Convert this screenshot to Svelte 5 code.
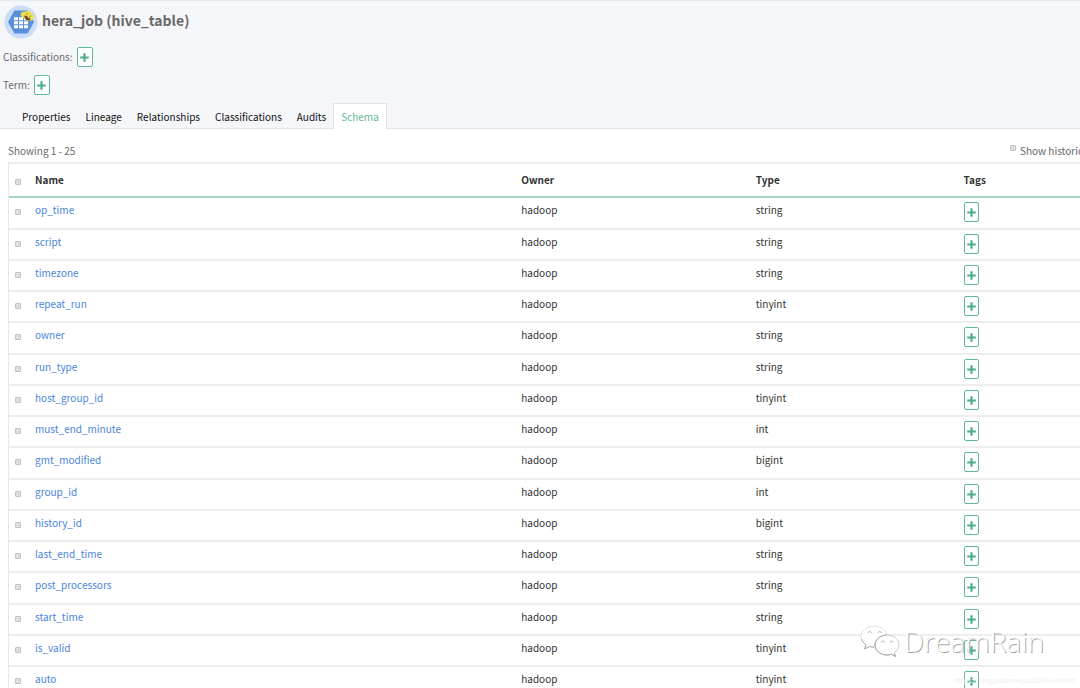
<script lang="ts">
  interface Column {
    name: string;
    type: string;
  }

  const tabs = ['Properties', 'Lineage', 'Relationships', 'Classifications', 'Audits', 'Schema'];

  const columns: Column[] = [
    { name: 'op_time', type: 'string' },
    { name: 'script', type: 'string' },
    { name: 'timezone', type: 'string' },
    { name: 'repeat_run', type: 'tinyint' },
    { name: 'owner', type: 'string' },
    { name: 'run_type', type: 'string' },
    { name: 'host_group_id', type: 'tinyint' },
    { name: 'must_end_minute', type: 'int' },
    { name: 'gmt_modified', type: 'bigint' },
    { name: 'group_id', type: 'int' },
    { name: 'history_id', type: 'bigint' },
    { name: 'last_end_time', type: 'string' },
    { name: 'post_processors', type: 'string' },
    { name: 'start_time', type: 'string' },
    { name: 'is_valid', type: 'tinyint' },
    { name: 'auto', type: 'tinyint' },
  ];

  let activeTab = $state('Schema');
  let selected = $state<string[]>([]);
  let showHistorical = $state(false);

  function toggleAll(e: Event) {
    const checked = (e.currentTarget as HTMLInputElement).checked;
    selected = checked ? columns.map((c) => c.name) : [];
  }
</script>

{#snippet addButton(label: string)}
  <button class="add" type="button" aria-label={label}>
    <svg viewBox="0 0 9 9" width="9" height="9" aria-hidden="true">
      <path d="M3.4 0.2h2.200v3.200h3.200v2.200H5.600v3.200H3.400V5.600H0.200V3.400h3.200z" fill="currentColor" />
    </svg>
  </button>
{/snippet}

<div class="page">
  <header class="entity">
    <div class="title">
      <svg class="entity-icon" viewBox="0 0 34 34" aria-hidden="true">
        <circle cx="17" cy="17" r="16.5" fill="#cbdcf6" />
        <path d="M10.500 5.500h13L30 17l-6.500 11.500h-13L4 17z" fill="#5a8fdc" />
        <path
          d="M10 12.200h4v3h-4zM15 12.200h4v3h-4zM20 12.200h4v3h-4zM10 16.200h4v3h-4zM15 16.200h4v3h-4zM20 16.200h4v3h-4zM10 20.200h4v3h-4zM15 20.200h4v3h-4zM20 20.200h4v3h-4z"
          fill="#fff"
        />
        <path d="M16.500 10c0-3 3-4 5.500-3.500C24 5 27 6 27.500 8.500c3 .5 3 5 .5 7l-4 .5-5-3z" fill="#f0dc50" />
        <path d="M20.500 10.500l2.500.5 1.500 2 2 .5-.5 2-3.500-.5-2-2.500z" fill="#5a5224" />
        <path d="M22 8l2 2M27 10.500l-2 1.500" stroke="#8a7d2a" stroke-width="0.8" />
      </svg>
      <h1>hera_job (hive_table)</h1>
    </div>
    <div class="meta"><span>Classifications:</span>{@render addButton('Add classification')}</div>
    <div class="meta"><span>Term:</span>{@render addButton('Add term')}</div>
    <nav class="tabs">
      {#each tabs as tab (tab)}
        <button type="button" class="tab" class:active={tab === activeTab} onclick={() => (activeTab = tab)}>
          {tab}
        </button>
      {/each}
    </nav>
  </header>

  <main>
    <div class="toolbar">
      <span>Showing 1 - 25</span>
      <label class="historical">
        <input type="checkbox" bind:checked={showHistorical} />
        Show historical entities
      </label>
    </div>

    <table>
      <thead>
        <tr>
          <th class="check"><input type="checkbox" aria-label="Select all" onchange={toggleAll} /></th>
          <th class="name">Name</th>
          <th class="owner">Owner</th>
          <th class="type">Type</th>
          <th>Tags</th>
        </tr>
      </thead>
      <tbody>
        {#each columns as column (column.name)}
          <tr>
            <td class="check">
              <input type="checkbox" value={column.name} aria-label={column.name} bind:group={selected} />
            </td>
            <td><a href="#{column.name}">{column.name}</a></td>
            <td>hadoop</td>
            <td>{column.type}</td>
            <td class="tags">{@render addButton(`Add tag to ${column.name}`)}</td>
          </tr>
        {/each}
      </tbody>
    </table>
  </main>

  <div class="watermark">
    <svg viewBox="0 0 40 34" width="40" height="34" aria-hidden="true">
      <g fill="#fff" stroke="#a4a4a4" stroke-width="0.9">
        <path
          d="M14 2C7 2 1 6.500 1 12.500c0 3.500 2 6.200 5 8.200l-1.500 4.300 5-2.500c1.500.4 3 .6 4.500.6 7 0 13-4.500 13-10.500S21 2 14 2z"
          stroke="#dcdcdc"
        />
        <path d="M1.500 15c.8 2.500 2.300 4.300 4.500 5.700l-1.500 4.300 5-2.500c1.500.4 3 .6 4.500.6" fill="none" />
        <path
          d="M27 11c-6.500 0-12 4.300-12 10s5.500 10 12 10c1.500 0 3-.3 4.300-.7l4.200 2.200-1.200-3.600c2.800-1.900 4.700-4.700 4.700-7.900 0-5.700-5.500-10-12-10z"
          stroke="#c4c4c4"
        />
        <path d="M27 11c-6.500 0-12 4.300-12 10s5.500 10 12 10c1.500 0 3-.3 4.300-.7l4.200 2.200-1.200-3.600" fill="none" />
        <path d="M8 9c.5-2 3-2 3.500 0M18 9c.5-2 3-2 3.500 0M21.500 18.500c.5-2 2.500-2 3 0M30 18.500c.5-2 2.500-2 3 0" fill="none" />
      </g>
    </svg>
    <span>DreamRain</span>
  </div>
  <div class="source">https://blog.csdn.net/su20145104009</div>
</div>

<style>
  :global(body) {
    margin: 0;
    background: #fff;
    overflow: hidden;
  }

  .page {
    position: relative;
    height: 100vh;
    overflow: hidden;
    font-family: 'Noto Sans CJK SC', 'Noto Sans', sans-serif;
    font-size: 10px;
    line-height: 16px;
    color: #333;
  }

  .entity {
    background: #f5f6fa;
    border-top: 1px solid #e6e8ee;
    border-bottom: 1px solid #e4e5e9;
  }

  .title {
    display: flex;
    align-items: center;
    gap: 4px;
    padding: 4px 4px 0;
  }

  .entity-icon {
    width: 34px;
    height: 34px;
  }

  h1 {
    margin: 0;
    padding-bottom: 4px;
    font-size: 14px;
    line-height: 24px;
    font-weight: 700;
    color: #686868;
  }

  .meta {
    display: flex;
    align-items: flex-start;
    gap: 4px;
    height: 20px;
    padding: 8px 3px 0;
    line-height: 20px;
    color: #686868;
  }

  .add {
    display: inline-flex;
    align-items: center;
    justify-content: center;
    box-sizing: border-box;
    width: 16px;
    height: 20px;
    padding: 0;
    border: 1px solid #5fb99a;
    border-radius: 2px;
    background: #fff;
    color: #4cae8c;
    cursor: pointer;
  }

  .tabs {
    display: flex;
    margin: 8px 0 -1px;
    padding-left: 14px;
  }

  .tab {
    box-sizing: border-box;
    height: 26px;
    margin-right: -1px;
    padding: 0 7px;
    border: 1px solid transparent;
    border-bottom: 0;
    background: none;
    font: inherit;
    color: #111;
    cursor: pointer;
  }

  .tab.active {
    border-color: #dfe1e6;
    background: #fff;
    color: #5fb99a;
  }

  main {
    padding-left: 8px;
  }

  .toolbar {
    display: flex;
    justify-content: space-between;
    padding: 14px 0 3px;
    color: #686868;
  }

  .historical {
    display: flex;
    gap: 4px;
    width: 70px;
    white-space: nowrap;
  }

  input[type='checkbox'] {
    display: block;
    appearance: none;
    flex: none;
    box-sizing: border-box;
    width: 6px;
    height: 6px;
    margin: 0;
    border: 1px solid #c4c4c4;
    border-radius: 1px;
    background: #dedede;
  }

  .historical input[type='checkbox'] {
    margin-top: 2px;
  }

  input[type='checkbox']:checked {
    background: #4cae8c;
  }

  table {
    width: 100%;
    table-layout: fixed;
    border-collapse: separate;
    border-spacing: 0;
    border-top: 2px solid #efefef;
    border-left: 1px solid #e8e8e8;
  }

  th,
  td {
    box-sizing: border-box;
    height: 31px;
    padding: 4px 0 0;
    border-bottom: 2px solid #eee;
    text-align: left;
    vertical-align: top;
  }

  th {
    height: 34px;
    padding-top: 8px;
    border-bottom-color: #a5d5c4;
    font-weight: 700;
  }

  /* keeps the row rhythm at a quarter pixel above 31 */
  tbody tr:nth-child(4n + 1) td {
    height: 32px;
  }

  .check {
    width: 26px;
    padding: 11px 0 0 6px;
  }

  th.check {
    padding-top: 15px;
  }

  .name {
    width: 45.4%;
  }

  .owner {
    width: 21.9%;
  }

  .type {
    width: 19.4%;
  }

  .tags {
    line-height: 0;
  }

  .tags .add {
    width: 15px;
  }

  a {
    color: #4a84dc;
    text-decoration: none;
  }

  .watermark {
    position: absolute;
    right: 36px;
    bottom: 30px;
    display: flex;
    align-items: center;
    gap: 4px;
    font-family: 'Open Sans', sans-serif;
    font-size: 28px;
    font-weight: 300;
    line-height: 34px;
    color: #fff;
    text-shadow: 1px 1px 0 #a4a4a4;
    pointer-events: none;
  }

  .source {
    position: absolute;
    right: 4px;
    bottom: 2px;
    font-size: 7px;
    line-height: 12px;
    color: #eee;
    pointer-events: none;
  }
</style>
